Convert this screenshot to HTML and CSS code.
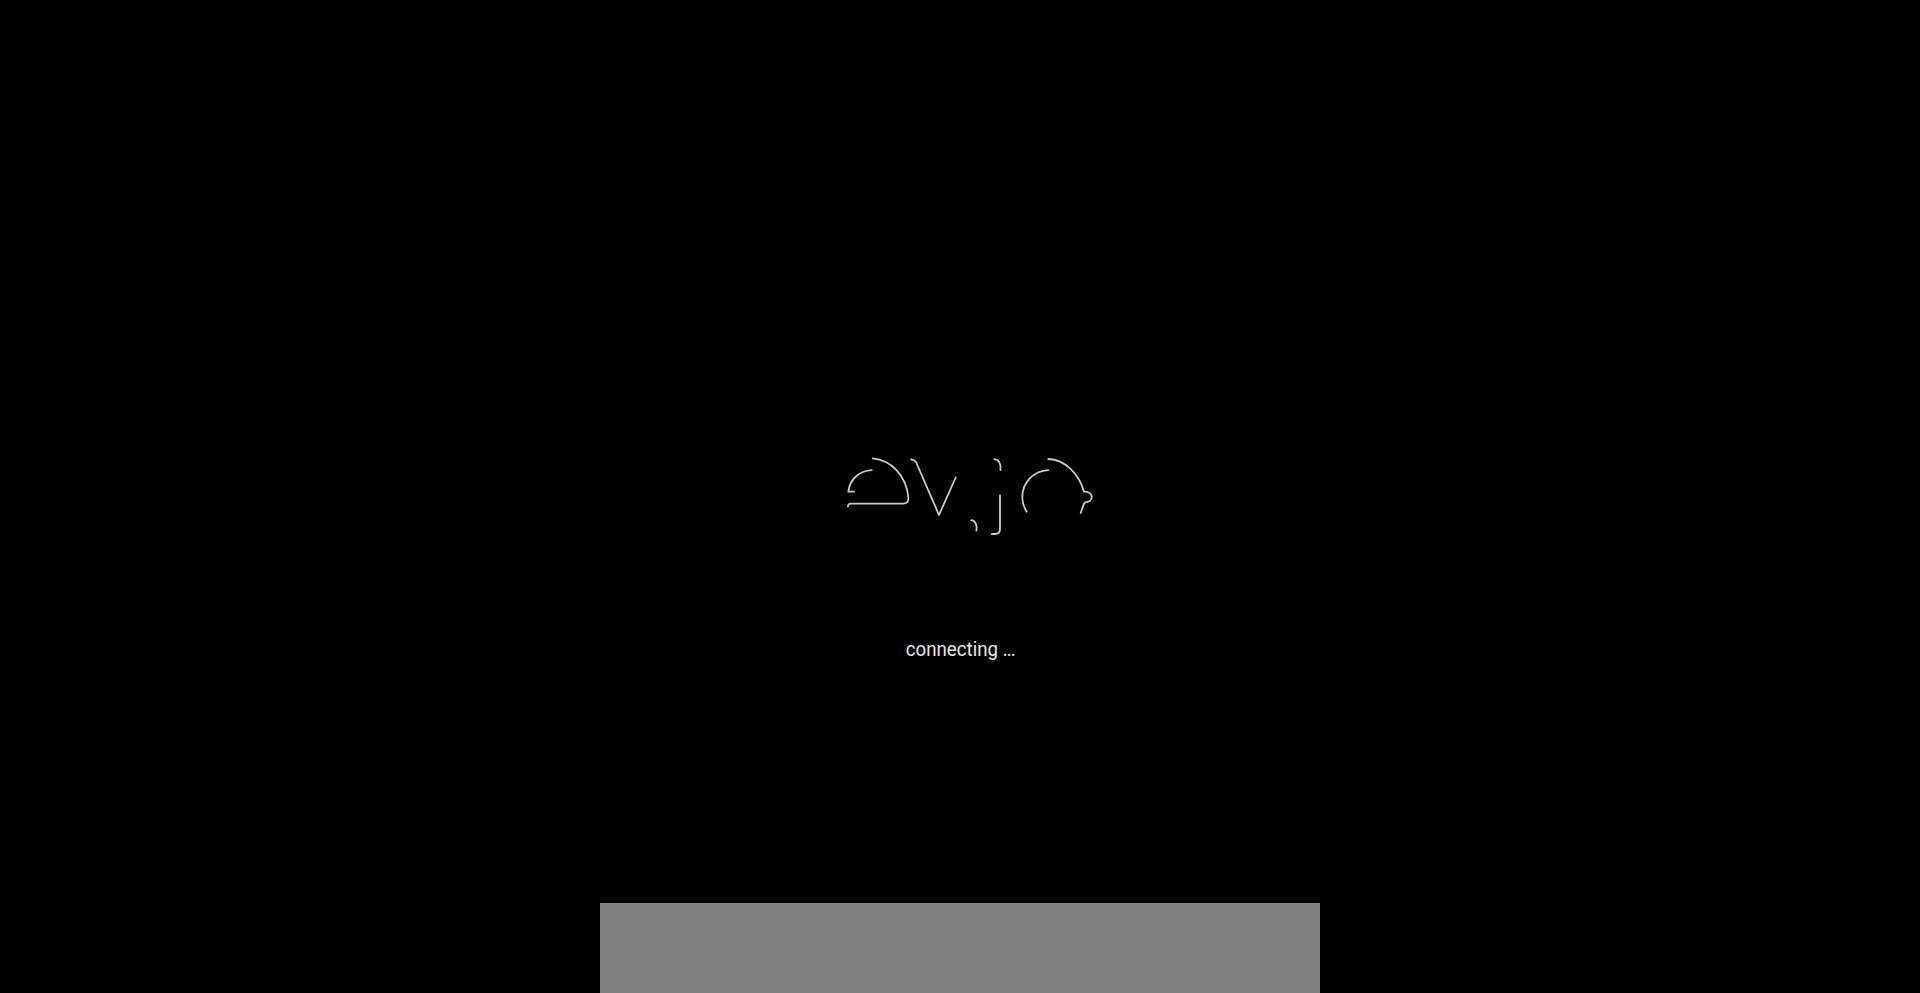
FILE: index.html
```html
<!DOCTYPE html>
<html lang="en">
<head>
    <meta charset="UTF-8">
    <title>connecting</title>
    <meta name="viewport" content="width=device-width, initial-scale=1.0">
    <link rel="stylesheet" href="styles.css">
</head>
<body>
    <div class="page">
        <div class="splash">
            <svg class="logo" width="260" height="90" viewBox="840 450 260 90" fill="none" stroke="#cccccc" stroke-width="1.8" stroke-linecap="round" stroke-linejoin="round">
                <!-- e -->
                <path d="M872.7 458.3C891 460 906 475 908.3 497C908.8 501.5 907 503.6 903 503.6L851 503.6C849 503.6 848 504.7 847.8 506.7"/>
                <path d="M871.7 470.2C859 471 850 479 848.3 491.7L854 491.7"/>
                <!-- v -->
                <path d="M911 459.3C913.5 459.5 915 460.3 916 462L939 515L955.7 477.5"/>
                <!-- comma, j -->
                <path d="M971.3 520.2C975 520.5 977.5 525 976.4 530.7"/>
                <path d="M994.5 459.2C998.5 459.5 1001 463 1000.5 470"/>
                <path d="M1000 495.5L1000 529C1000 532.5 998.5 534 995 534L991.7 534"/>
                <!-- o -->
                <path d="M1048.3 459C1065 459.5 1079 474 1084 491.7C1089 491.5 1091.7 494 1091.7 497C1091.7 500 1089 502.3 1085 502.3C1083 505 1082 509 1080.7 513"/>
                <path d="M1048.3 470.2C1033 471 1022.3 483 1022.3 497C1022.3 503 1024 507.5 1026.7 511.7"/>
            </svg>
            <div class="status">connecting <span class="dots">...</span></div>
        </div>
        <div class="banner"></div>
    </div>
</body>
</html>
```
FILE: styles.css
```css
html, body {
    margin: 0;
    height: 100%;
    background: #000;
}
.page {
    display: flex;
    flex-direction: column;
    align-items: center;
    height: 100%;
}
.splash {
    flex: 1;
    display: flex;
    flex-direction: column;
    align-items: center;
    padding-top: 450px;
}
.logo {
    display: block;
    margin-left: 20px;
}
.status {
    margin-top: 96px;
    color: #e6e6e6;
    font-family: "Roboto", sans-serif;
    font-size: 21px;
    line-height: 26px;
    transform: scaleX(0.89);
    white-space: nowrap;
}
.dots {
    letter-spacing: -1px;
}
.banner {
    width: 720px;
    height: 90px;
    background: #808080;
}
```
